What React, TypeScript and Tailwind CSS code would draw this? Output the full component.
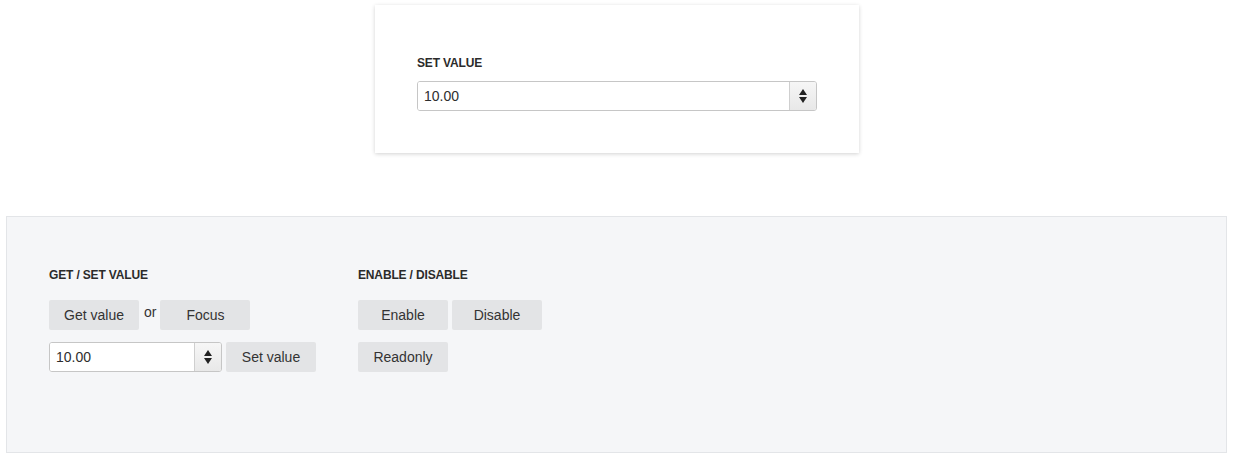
import React from "react";

const font = { fontFamily: '"Liberation Sans", Arial, sans-serif' };

function Spinner({ value, width }: { value: string; width: string }) {
  return (
    <div
      className={`flex h-[30px] ${width} overflow-hidden rounded-[3px] border border-[#c6c6c6] bg-white`}
    >
      <input
        readOnly
        value={value}
        className="min-w-0 flex-1 bg-white px-[6px] text-[14px] text-[#2e2e2e] outline-none"
        style={font}
      />
      <div className="flex w-[27px] flex-col items-center justify-center gap-[2px] border-l border-[#cfcfcf] bg-gradient-to-b from-[#f6f6f6] to-[#e8e8e8]">
        <svg width="8" height="6" viewBox="0 0 8 6">
          <path d="M4 0 L8 6 L0 6 Z" fill="#222" />
        </svg>
        <svg width="8" height="6" viewBox="0 0 8 6">
          <path d="M0 0 L8 0 L4 6 Z" fill="#222" />
        </svg>
      </div>
    </div>
  );
}

function Btn({ children }: { children: React.ReactNode }) {
  return (
    <button className="h-[30px] w-[90px] rounded-[2px] bg-[#e3e4e6] text-[14px] text-[#333]">
      {children}
    </button>
  );
}

function Label({ children }: { children: React.ReactNode }) {
  return (
    <div className="text-[12px] leading-4 font-bold tracking-[-0.15px] text-[#2b2b2b]">
      {children}
    </div>
  );
}

export default function App() {
  return (
    <div className="min-h-[456px] bg-white pt-[5px]" style={font}>
      <div className="mx-auto w-[484px] bg-white px-[42px] pt-[50px] pb-[42px] shadow-[0_1px_4px_rgba(0,0,0,0.18)]">
        <Label>SET VALUE</Label>
        <div className="mt-[10px]">
          <Spinner value="10.00" width="w-[400px]" />
        </div>
      </div>

      <div className="mt-[63px] mr-[7px] ml-[6px] h-[237px] border border-[#e3e5e8] bg-[#f5f6f8] pt-[50px] pl-[42px]">
        <div className="flex gap-[42px]">
          <div className="flex flex-col">
            <Label>GET / SET VALUE</Label>
            <div className="mt-[17px] flex items-center">
              <Btn>Get value</Btn>
              <span className="mr-[4px] ml-[5px] -mt-[6px] text-[14px] text-[#333]">or</span>
              <Btn>Focus</Btn>
            </div>
            <div className="mt-[12px] flex items-center gap-[4px]">
              <Spinner value="10.00" width="w-[173px]" />
              <Btn>Set value</Btn>
            </div>
          </div>
          <div className="flex flex-col">
            <Label>ENABLE / DISABLE</Label>
            <div className="mt-[17px] flex gap-[4px]">
              <Btn>Enable</Btn>
              <Btn>Disable</Btn>
            </div>
            <div className="mt-[12px] flex">
              <Btn>Readonly</Btn>
            </div>
          </div>
        </div>
      </div>
    </div>
  );
}
